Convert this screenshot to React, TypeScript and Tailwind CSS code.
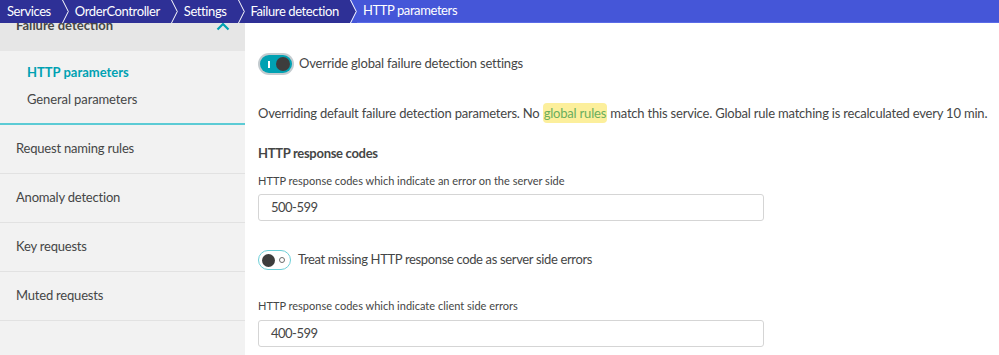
import React from "react";

const DARK = "#2e3096";
const LIGHT = "#4556d8";

function Sep({ last }: { last?: boolean }) {
  return (
    <svg width="7" height="23" viewBox="0 0 7 23" className="shrink-0 block">
      <rect x="0" y="0" width="7" height="23" fill={last ? LIGHT : DARK} />
      {last && <polygon points="0,0 6,11.5 0,23" fill={DARK} />}
      <polyline points="0.5,0 6.3,11.5 0.5,23" fill="none" stroke="#ffffff" strokeWidth="1" />
    </svg>
  );
}

function Crumb({ children, first }: { children: React.ReactNode; first?: boolean }) {
  return (
    <div className={`flex items-center h-full bg-[#2e3096] text-white text-[13px] tracking-[-0.4px] ${first ? "pl-[7px]" : "pl-[6px]"} pr-[11px]`}>
      {children}
    </div>
  );
}

export default function App() {
  return (
    <div className="w-[999px] h-[355px] overflow-hidden flex flex-col bg-white text-[#454646] font-['Lato',sans-serif]">
      <div className="relative z-10 h-[23px] flex shrink-0">
        <Crumb first>Services</Crumb>
        <Sep />
        <Crumb>OrderController</Crumb>
        <Sep />
        <Crumb>Settings</Crumb>
        <Sep />
        <Crumb>Failure detection</Crumb>
        <Sep last />
        <div className="flex-1 flex items-center h-full bg-[#4556d8] border-b border-[#5a6be8] text-white text-[13px] tracking-[-0.4px] pl-[6px]">
          HTTP parameters
        </div>
      </div>
      <div className="flex flex-1 min-h-0">
        <aside className="w-[245px] shrink-0 bg-[#f2f2f2] flex flex-col">
          <div className="-mt-[22px] h-[50px] bg-[#e6e6e6] flex items-center justify-between pl-[16px] pr-[15px]">
            <span className="text-[13px] font-bold text-[#454646]">Failure detection</span>
            <svg width="14" height="9" viewBox="0 0 14 9">
              <polyline points="1.5,7.5 7,2 12.5,7.5" fill="none" stroke="#00a1b2" strokeWidth="2.2" />
            </svg>
          </div>
          <div className="flex flex-col pl-[27px] pt-[11px] pb-[12px]">
            <div className="h-[22px] flex items-center text-[13px] font-bold text-[#00a1b2]">HTTP parameters</div>
            <div className="h-[22px] mt-[5px] flex items-center text-[13px] tracking-[-0.1px]">General parameters</div>
          </div>
          <div className="h-[2px] bg-[#5ccbd5]" />
          {["Request naming rules", "Anomaly detection", "Key requests", "Muted requests"].map((t) => (
            <div key={t} className="h-[49px] flex items-center pl-[16px] text-[13px] tracking-[-0.2px] border-b border-[#e2e2e2]">
              {t}
            </div>
          ))}
        </aside>
        <main className="flex-1 pl-[13px] flex flex-col text-[13px] tracking-[-0.2px]">
          <div className="mt-[30px] flex items-center h-[22px]">
            <div className="w-[36px] h-[22px] rounded-full bg-[#c3cbcf] p-[2px]">
              <div className="w-full h-full rounded-full bg-[#00a1b2] flex items-center justify-between pl-[8px] pr-[2px]">
                <div className="w-[1.5px] h-[7px] bg-white" />
                <div className="w-[14px] h-[14px] rounded-full bg-[#3d3d3d]" />
              </div>
            </div>
            <span className="ml-[5px]">Override global failure detection settings</span>
          </div>
          <p className="mt-[28px] h-[20px] leading-[20px] whitespace-nowrap">
            Overriding default failure detection parameters. No{" "}
            <span className="bg-[#fcef9c] text-[#6aae5c] rounded-sm px-[1px] py-[2px]">global rules</span> match this service. Global rule matching is recalculated every 10 min.
          </p>
          <h3 className="mt-[20px] h-[20px] leading-[20px] font-bold tracking-[-0.3px]">HTTP response codes</h3>
          <label className="mt-[10px] h-[16px] leading-[16px] text-[11px] tracking-normal">HTTP response codes which indicate an error on the server side</label>
          <div className="mt-[5px] w-[506px] h-[27px] border border-[#d5d5d5] rounded-[3px] flex items-center pl-[12px] tracking-[-0.5px]">500-599</div>
          <div className="mt-[29px] flex items-center h-[20px]">
            <div className="w-[33px] h-[20px] rounded-full border-[1.5px] border-[#6dcfd8] bg-white flex items-center justify-between pl-[3px] pr-[5px]">
              <div className="w-[13px] h-[13px] rounded-full bg-[#3d3d3d]" />
              <div className="w-[6px] h-[6px] rounded-full border border-[#6b6b6b]" />
            </div>
            <span className="ml-[7px] tracking-[-0.35px]">Treat missing HTTP response code as server side errors</span>
          </div>
          <label className="mt-[28px] h-[16px] leading-[16px] text-[11px] tracking-normal">HTTP response codes which indicate client side errors</label>
          <div className="mt-[6px] w-[506px] h-[27px] border border-[#d5d5d5] rounded-[3px] flex items-center pl-[12px] tracking-[-0.5px]">400-599</div>
        </main>
      </div>
    </div>
  );
}
